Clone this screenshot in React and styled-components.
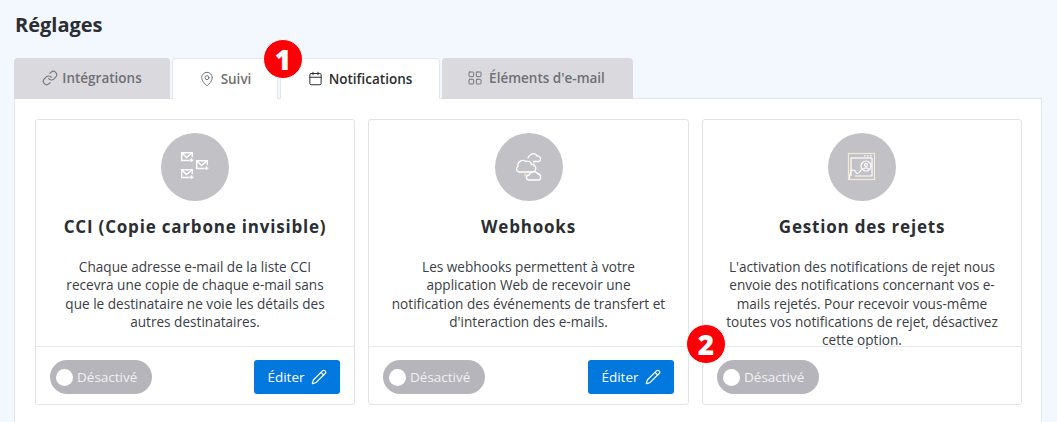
import React from 'react';
import styled, { createGlobalStyle } from 'styled-components';
import { Link, MapPin, Calendar, LayoutGrid, Pencil } from 'lucide-react';

const GlobalStyle = createGlobalStyle`
  html, body {
    margin: 0;
    padding: 0;
    height: 100%;
    overflow: hidden;
    background: #f3f7fe;
    font-family: "Open Sans", "Liberation Sans", sans-serif;
  }
  * { box-sizing: border-box; }
`;

const cards = [
  {
    title: 'CCI (Copie carbone invisible)',
    text: "Chaque adresse e-mail de la liste CCI recevra une copie de chaque e-mail sans que le destinataire ne voie les détails des autres destinataires.",
    icon: <MailsIcon />,
    edit: true,
  },
  {
    title: 'Webhooks',
    text: "Les webhooks permettent à votre application Web de recevoir une notification des événements de transfert et d'interaction des e-mails.",
    icon: <CloudsIcon />,
    edit: true,
  },
  {
    title: 'Gestion des rejets',
    text: "L'activation des notifications de rejet nous envoie des notifications concernant vos e-mails rejetés. Pour recevoir vous-même toutes vos notifications de rejet, désactivez cette option.",
    icon: <BounceIcon />,
    edit: false,
    badge: true,
  },
];

function MailGlyph({ x, y }) {
  return (
    <g transform={`translate(${x} ${y})`}>
      <path d="M8.500 8.500H0.700V0.700H11.300V5" />
      <path d="M0.700 0.700L5.500 5.500L11.300 0.700" />
      <path d="M10.500 6.300v3.700M8.700 8.200h3.600" />
    </g>
  );
}

function MailsIcon() {
  return (
    <svg width="30" height="30" viewBox="0 0 30 30" fill="none" stroke="#fff" strokeWidth="1.4">
      <MailGlyph x={1} y={0} />
      <MailGlyph x={16} y={8} />
      <MailGlyph x={1} y={17} />
    </svg>
  );
}

function CloudsIcon() {
  return (
    <svg width="30" height="30" viewBox="0 0 30 30" fill="none" stroke="#fff" strokeWidth="1.3">
      <path d="M14 6.500a3 3 0 0 1 2-3a4 4 0 0 1 7 .5a3 3 0 0 1 3.500 3a2.500 2.500 0 0 1 -1.500 2.500H19" />
      <path d="M20 10.500v4.500" stroke="#f2dcc4" />
      <path d="M5 20a3 3 0 0 1 -1-5.500a5 5 0 0 1 8-5a4 4 0 0 1 5.500 3a3.500 3.500 0 0 1 1 7.500z" />
      <path d="M11 20v4h3" stroke="#f2dcc4" />
      <path d="M15 28a2.500 2.500 0 0 1 0-5a5 5 0 0 1 8.500-1.500a3.500 3.500 0 0 1 3 3.500a3 3 0 0 1 -1 3z" />
    </svg>
  );
}

function BounceIcon() {
  return (
    <svg width="30" height="30" viewBox="0 0 30 30" fill="none" stroke="#fff" strokeWidth="1.2">
      <rect x="1.500" y="1.500" width="26" height="26" stroke="#f3ead8" />
      <path d="M4 6h21" />
      <path d="M17 3.800h1.500M20 3.800h1.500M23 3.800h1.500" />
      <path d="M4 24V6M25 6v18H8" />
      <path d="M2.500 27c0-7 1.500-9 4-9s2 3.500 4 3.500s3-3.500 5-5" />
      <circle cx="19" cy="14" r="5" />
      <circle cx="19" cy="12.800" r="1.500" />
      <path d="M16.500 17c.5-1.500 4.500-1.500 5 0" />
    </svg>
  );
}

export default function App() {
  return (
    <Page>
      <GlobalStyle />
      <Title>Réglages</Title>
      <Tabs>
        <Tab $width={156} $gap={4}>
          <Link size={16} strokeWidth={1.7} />
          Intégrations
        </Tab>
        <Tab $width={106} $open>
          <MapPin size={16} strokeWidth={1.5} />
          Suivi
        </Tab>
        <Tab $width={160} $open $active>
          <Calendar size={15} strokeWidth={1.6} />
          Notifications
          <Badge $top={-20} $left={-18}>1</Badge>
        </Tab>
        <Tab $width={191} $shift={3}>
          <LayoutGrid size={16} strokeWidth={1.5} />
          Éléments d'e-mail
        </Tab>
      </Tabs>
      <Panel>
        <Cards>
          {cards.map((card) => (
            <Card key={card.title}>
              <CardBody>
                <Circle>{card.icon}</Circle>
                <CardTitle>{card.title}</CardTitle>
                <CardText>{card.text}</CardText>
              </CardBody>
              <CardFooter>
                <Toggle>
                  <Knob />
                  Désactivé
                </Toggle>
                {card.edit && (
                  <EditButton>
                    Éditer
                    <Pencil size={16} strokeWidth={1.8} />
                  </EditButton>
                )}
                {card.badge && <Badge $top={-23} $left={-17}>2</Badge>}
              </CardFooter>
            </Card>
          ))}
        </Cards>
      </Panel>
    </Page>
  );
}

const Page = styled.div`
  height: 422px;
  padding: 11px 15px 0 14px;
  display: flex;
  flex-direction: column;
`;

const Title = styled.h1`
  margin: 0;
  height: 37px;
  padding-left: 1px;
  font-size: 20px;
  line-height: 28px;
  font-weight: 700;
  color: #2b2e33;
`;

const Tabs = styled.div`
  display: flex;
  gap: 2px;
  margin-top: 10px;
  height: 41px;
  position: relative;
  z-index: 1;
`;

const Tab = styled.div`
  position: relative;
  width: ${(p) => p.$width}px;
  height: 41px;
  padding: 0 ${(p) => p.$shift || 0}px 1px 0;
  display: flex;
  align-items: center;
  justify-content: center;
  gap: ${(p) => p.$gap || 6}px;
  font-size: 13.5px;
  font-weight: 600;
  border-radius: 4px 4px 0 0;
  color: ${(p) => (p.$active ? '#2a2d32' : '#6f7075')};
  background: ${(p) => (p.$open ? '#fff' : '#dad9de')};
  border: ${(p) => (p.$open ? '1px solid #e4e6ec' : '0')};
  border-bottom: 0;
  & svg {
    color: ${(p) => (p.$active ? '#2a2d32' : '#76777c')};
  }
`;

const Badge = styled.span`
  position: absolute;
  top: ${(p) => p.$top}px;
  left: ${(p) => p.$left}px;
  width: 40px;
  height: 40px;
  border-radius: 50%;
  background: #fb0007;
  border: 1px solid #fff;
  color: #fff;
  font-size: 28px;
  font-weight: 800;
  line-height: 1;
  display: flex;
  align-items: center;
  justify-content: center;
  z-index: 3;
`;

const Panel = styled.div`
  flex: 1;
  margin-top: -1px;
  background: #fff;
  border: 1px solid #e4e6ec;
  border-bottom: 0;
  padding: 20px 19px 0 20px;
`;

const Cards = styled.div`
  display: grid;
  grid-template-columns: 320px 321px 320px;
  gap: 13px;
`;

const Card = styled.div`
  height: 286px;
  background: #fff;
  border: 1px solid #e2e3e7;
  border-radius: 3px;
  display: flex;
  flex-direction: column;
`;

const CardBody = styled.div`
  height: 226px;
  padding: 13px 20px 0;
  display: flex;
  flex-direction: column;
  align-items: center;
  text-align: center;
`;

const Circle = styled.div`
  flex: none;
  width: 68px;
  height: 68px;
  border-radius: 50%;
  background: #c2c2c6;
  display: flex;
  align-items: center;
  justify-content: center;
`;

const CardTitle = styled.h2`
  margin: 14px 0 0;
  font-size: 17px;
  line-height: 24px;
  font-weight: 700;
  letter-spacing: 0.8px;
  color: #2b2e33;
  white-space: nowrap;
`;

const CardText = styled.p`
  margin: 19px 0 0;
  font-size: 13.6px;
  line-height: 18.3px;
  color: #3b3e44;
`;

const CardFooter = styled.div`
  position: relative;
  flex: 1;
  border-top: 1px solid #e8e9ec;
  padding: 13px 14px 0 14px;
  display: flex;
  justify-content: space-between;
  align-items: flex-start;
`;

const Toggle = styled.div`
  width: 102px;
  height: 34px;
  border-radius: 17px;
  background: #b5b5bb;
  color: #f1f1f3;
  font-size: 13.5px;
  display: flex;
  align-items: center;
  gap: 4px;
  padding-left: 6px;
`;

const Knob = styled.span`
  width: 17px;
  height: 17px;
  border-radius: 50%;
  background: #fff;
`;

const EditButton = styled.button`
  width: 86px;
  height: 34px;
  border: 0;
  border-radius: 3px;
  background: #0078de;
  color: #fff;
  font: 400 13.5px "Open Sans", "Liberation Sans", sans-serif;
  display: flex;
  align-items: center;
  justify-content: center;
  gap: 6px;
  padding: 0;
`;
